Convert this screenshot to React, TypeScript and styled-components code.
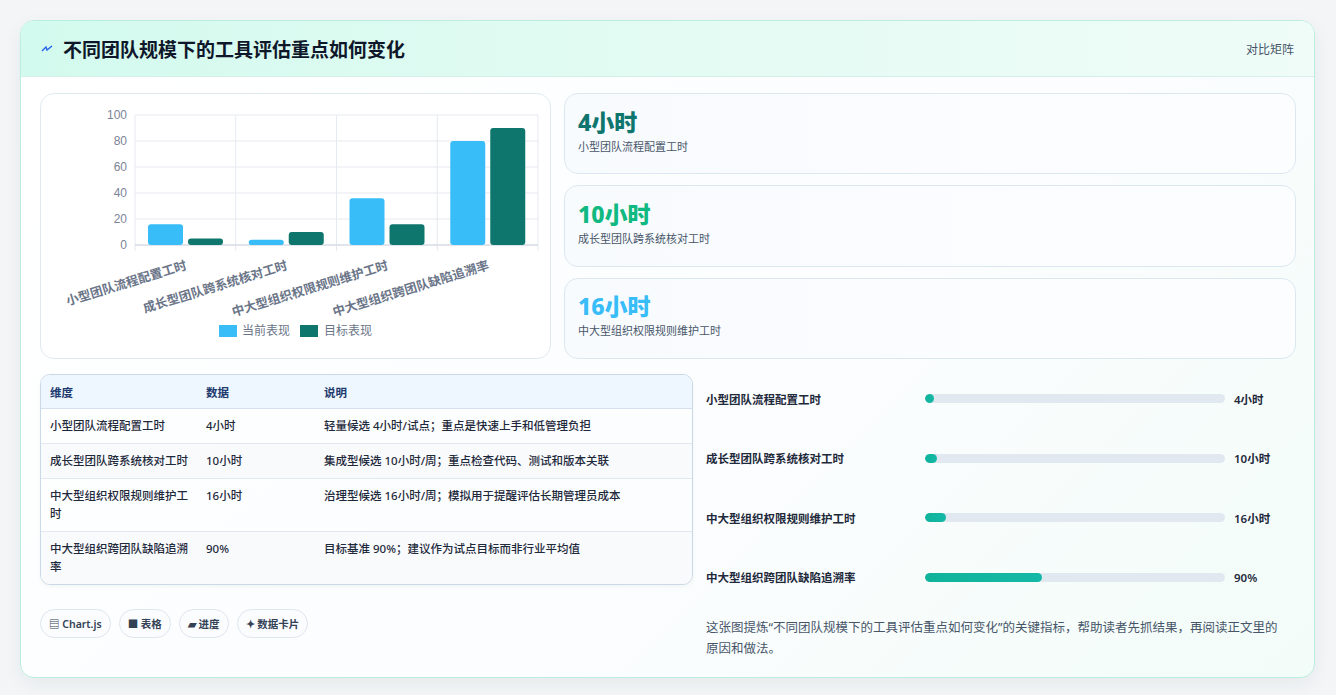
import styled, { createGlobalStyle } from 'styled-components';

const Global = createGlobalStyle`
  body { margin: 0; background: #f3f5f7; font-family: "Noto Sans", "Noto Sans CJK SC", sans-serif; }
`;

const Page = styled.div`
  padding: 20px 21px 21px 20px;
`;

const Card = styled.div`
  background: linear-gradient(135deg, #ffffff 0%, #fbfdfe 60%, #f2fcf8 100%);
  border: 1px solid #bdeedd;
  border-radius: 14px;
  overflow: hidden;
  box-shadow: 0 6px 18px rgba(15, 60, 50, 0.06);
`;

const Header = styled.div`
  height: 55px;
  display: flex;
  align-items: center;
  justify-content: space-between;
  padding: 0 20px;
  background: linear-gradient(90deg, #d3faee 0%, #e6fbf4 60%, #effcf8 100%);
  border-bottom: 1px solid #d6efe8;
`;

const Title = styled.h1`
  margin: 0;
  font-size: 19px;
  font-weight: 700;
  color: #0f172a;
  display: flex;
  align-items: center;
  gap: 10px;
`;

const Tag = styled.span`
  font-size: 12px;
  color: #475569;
`;

const Body = styled.div`
  padding: 16px 18px 18px 19px;
  display: flex;
  flex-direction: column;
  gap: 15px;
`;

const Row = styled.div<{ $left: number }>`
  display: grid;
  grid-template-columns: ${(p) => p.$left}px 1fr;
  column-gap: 13px;
`;

const ChartCard = styled.div`
  height: 266px;
  background: #fff;
  border: 1px solid #dfeaf0;
  border-radius: 14px;
  box-sizing: border-box;
`;

const Stats = styled.div`
  display: grid;
  grid-template-rows: repeat(3, 1fr);
  gap: 11px;
`;

const Stat = styled.div`
  background: linear-gradient(90deg, #f8fbfe, #fcfdff);
  border: 1px solid #dbe8f1;
  border-radius: 14px;
  padding: 4px 13px 10px;
  display: flex;
  flex-direction: column;
  justify-content: center;
`;

const StatValue = styled.div<{ $c: string }>`
  font-size: 23px;
  font-weight: 800;
  color: ${(p) => p.$c};
  line-height: 28px;
`;

const StatLabel = styled.div`
  font-size: 11px;
  color: #475569;
  margin-top: 2px;
`;

const Left = styled.div`
  display: flex;
  flex-direction: column;
`;

const Table = styled.table`
  width: 100%;
  border-collapse: separate;
  border-spacing: 0;
  border: 1px solid #cbd9e6;
  border-radius: 10px;
  overflow: hidden;
  font-size: 11.5px;
  font-weight: 500;
  color: #1e293b;
  box-shadow: 0 2px 4px rgba(0, 0, 0, 0.04);
  th {
    background: #eef6ff;
    color: #1e3a6e;
    font-weight: 700;
    text-align: left;
    height: 33px;
    padding: 0 9px;
    border-bottom: 1px solid #d5e2ee;
  }
  td {
    padding: 8px 9px;
    line-height: 18px;
    vertical-align: top;
    border-bottom: 1px solid #e2e8f0;
  }
  tr:nth-child(even) td { background: #f8fafc; }
  tr:last-child td { border-bottom: none; }
`;

const Chips = styled.div`
  display: flex;
  gap: 8px;
  margin-top: 24px;
`;

const Chip = styled.span`
  font-size: 10.5px;
  font-weight: 600;
  color: #334155;
  border: 1px solid #dde6ee;
  background: #fbfcfe;
  border-radius: 15px;
  padding: 6px 8px;
`;

const Right = styled.div`
  display: flex;
  flex-direction: column;
  padding: 0 7px 0 0;
`;

const Progress = styled.div`
  display: grid;
  grid-template-columns: 210px 300px 1fr;
  align-items: center;
  column-gap: 9px;
  height: 59.5px;
  font-size: 11.5px;
  font-weight: 600;
  color: #1e293b;
  &:first-child { margin-top: -5px; }
`;

const Track = styled.div`
  height: 9px;
  border-radius: 5px;
  background: #e2e8f0;
  overflow: hidden;
`;

const Fill = styled.div`
  height: 100%;
  border-radius: 5px;
  background: linear-gradient(90deg, #10b39a, #14b8a6);
`;

const Note = styled.p`
  margin: 10px 0 0;
  font-size: 12.5px;
  line-height: 21px;
  color: #475569;
`;

const cats = ['小型团队流程配置工时', '成长型团队跨系统核对工时', '中大型组织权限规则维护工时', '中大型组织跨团队缺陷追溯率'];
const cur = [16, 4, 36, 80];
const tgt = [5, 10, 16, 90];

function Chart() {
  const x0 = 94, y0 = 21, w = 403, h = 130;
  const cw = w / 4;
  return (
    <svg width="510" height="264" style={{ display: 'block' }}>
      {[0, 20, 40, 60, 80, 100].map((v) => {
        const y = y0 + h - (v / 100) * h;
        return (
          <g key={v}>
            <line x1={x0} x2={x0 + w} y1={y} y2={y} stroke="#e5e9f0" />
            <text x={x0 - 8} y={y + 4} fontSize="12" fill="#7b8496" textAnchor="end" fontFamily="Liberation Sans, sans-serif">{v}</text>
          </g>
        );
      })}
      {[0, 1, 2, 3, 4].map((i) => (
        <line key={i} x1={x0 + i * cw} x2={x0 + i * cw} y1={y0} y2={y0 + h + 6} stroke="#e5e9f0" />
      ))}
      <line x1={x0} x2={x0 + w} y1={y0 + h} y2={y0 + h} stroke="#cfd6e0" />
      {cats.map((c, i) => {
        const bx = x0 + i * cw + 13;
        const ch = (cur[i] / 100) * h;
        const th = (tgt[i] / 100) * h;
        const lx = x0 + i * cw + cw / 2 + 2;
        const ly = y0 + h + 24;
        return (
          <g key={c}>
            <rect x={bx} y={y0 + h - ch} width={35} height={ch} rx={3} fill="#38bdf8" />
            <rect x={bx + 40} y={y0 + h - th} width={35} height={th} rx={3} fill="#0f766e" />
            <text x={lx} y={ly} fontSize="12.5" fontWeight="700" fill="#6b7588" textAnchor="end" transform={`rotate(-17 ${lx} ${ly})`}>
              {c}
            </text>
          </g>
        );
      })}
      <rect x={178} y={231} width={18} height={12} fill="#38bdf8" />
      <text x={201} y={241} fontSize="12" fill="#6b7588">当前表现</text>
      <rect x={259} y={231} width={18} height={12} fill="#0f766e" />
      <text x={283} y={241} fontSize="12" fill="#6b7588">目标表现</text>
    </svg>
  );
}

const rows = [
  ['小型团队流程配置工时', '4小时', '轻量候选 4小时/试点；重点是快速上手和低管理负担'],
  ['成长型团队跨系统核对工时', '10小时', '集成型候选 10小时/周；重点检查代码、测试和版本关联'],
  ['中大型组织权限规则维护工时', '16小时', '治理型候选 16小时/周；模拟用于提醒评估长期管理员成本'],
  ['中大型组织跨团队缺陷追溯率', '90%', '目标基准 90%；建议作为试点目标而非行业平均值'],
];

const bars = [
  ['小型团队流程配置工时', '4小时', 3],
  ['成长型团队跨系统核对工时', '10小时', 4],
  ['中大型组织权限规则维护工时', '16小时', 7],
  ['中大型组织跨团队缺陷追溯率', '90%', 39],
] as const;

export default function App() {
  return (
    <Page>
      <Global />
      <Card>
        <Header>
          <Title>
            <svg width="12" height="10" viewBox="0 0 12 10">
              <path d="M1 7 L5 3 L6 6 L11 2" stroke="#2563eb" strokeWidth="1.4" fill="none" />
            </svg>
            不同团队规模下的工具评估重点如何变化
          </Title>
          <Tag>对比矩阵</Tag>
        </Header>
        <Body>
          <Row $left={511}>
            <ChartCard>
              <Chart />
            </ChartCard>
            <Stats>
              <Stat>
                <StatValue $c="#0f766e">4小时</StatValue>
                <StatLabel>小型团队流程配置工时</StatLabel>
              </Stat>
              <Stat>
                <StatValue $c="#10b981">10小时</StatValue>
                <StatLabel>成长型团队跨系统核对工时</StatLabel>
              </Stat>
              <Stat>
                <StatValue $c="#38bdf8">16小时</StatValue>
                <StatLabel>中大型组织权限规则维护工时</StatLabel>
              </Stat>
            </Stats>
          </Row>
          <Row $left={653}>
            <Left>
              <Table>
                <colgroup>
                  <col style={{ width: 156 }} />
                  <col style={{ width: 118 }} />
                  <col />
                </colgroup>
                <thead>
                  <tr><th>维度</th><th>数据</th><th>说明</th></tr>
                </thead>
                <tbody>
                  {rows.map((r) => (
                    <tr key={r[0]}>
                      <td>{r[0]}</td>
                      <td>{r[1]}</td>
                      <td>{r[2]}</td>
                    </tr>
                  ))}
                </tbody>
              </Table>
              <Chips>
                <Chip>▤ Chart.js</Chip>
                <Chip>■ 表格</Chip>
                <Chip>▰ 进度</Chip>
                <Chip>✦ 数据卡片</Chip>
              </Chips>
            </Left>
            <Right>
              {bars.map((b) => (
                <Progress key={b[0]}>
                  <span>{b[0]}</span>
                  <Track>
                    <Fill style={{ width: `${b[2]}%` }} />
                  </Track>
                  <span>{b[1]}</span>
                </Progress>
              ))}
              <Note>这张图提炼“不同团队规模下的工具评估重点如何变化”的关键指标，帮助读者先抓结果，再阅读正文里的原因和做法。</Note>
            </Right>
          </Row>
        </Body>
      </Card>
    </Page>
  );
}
